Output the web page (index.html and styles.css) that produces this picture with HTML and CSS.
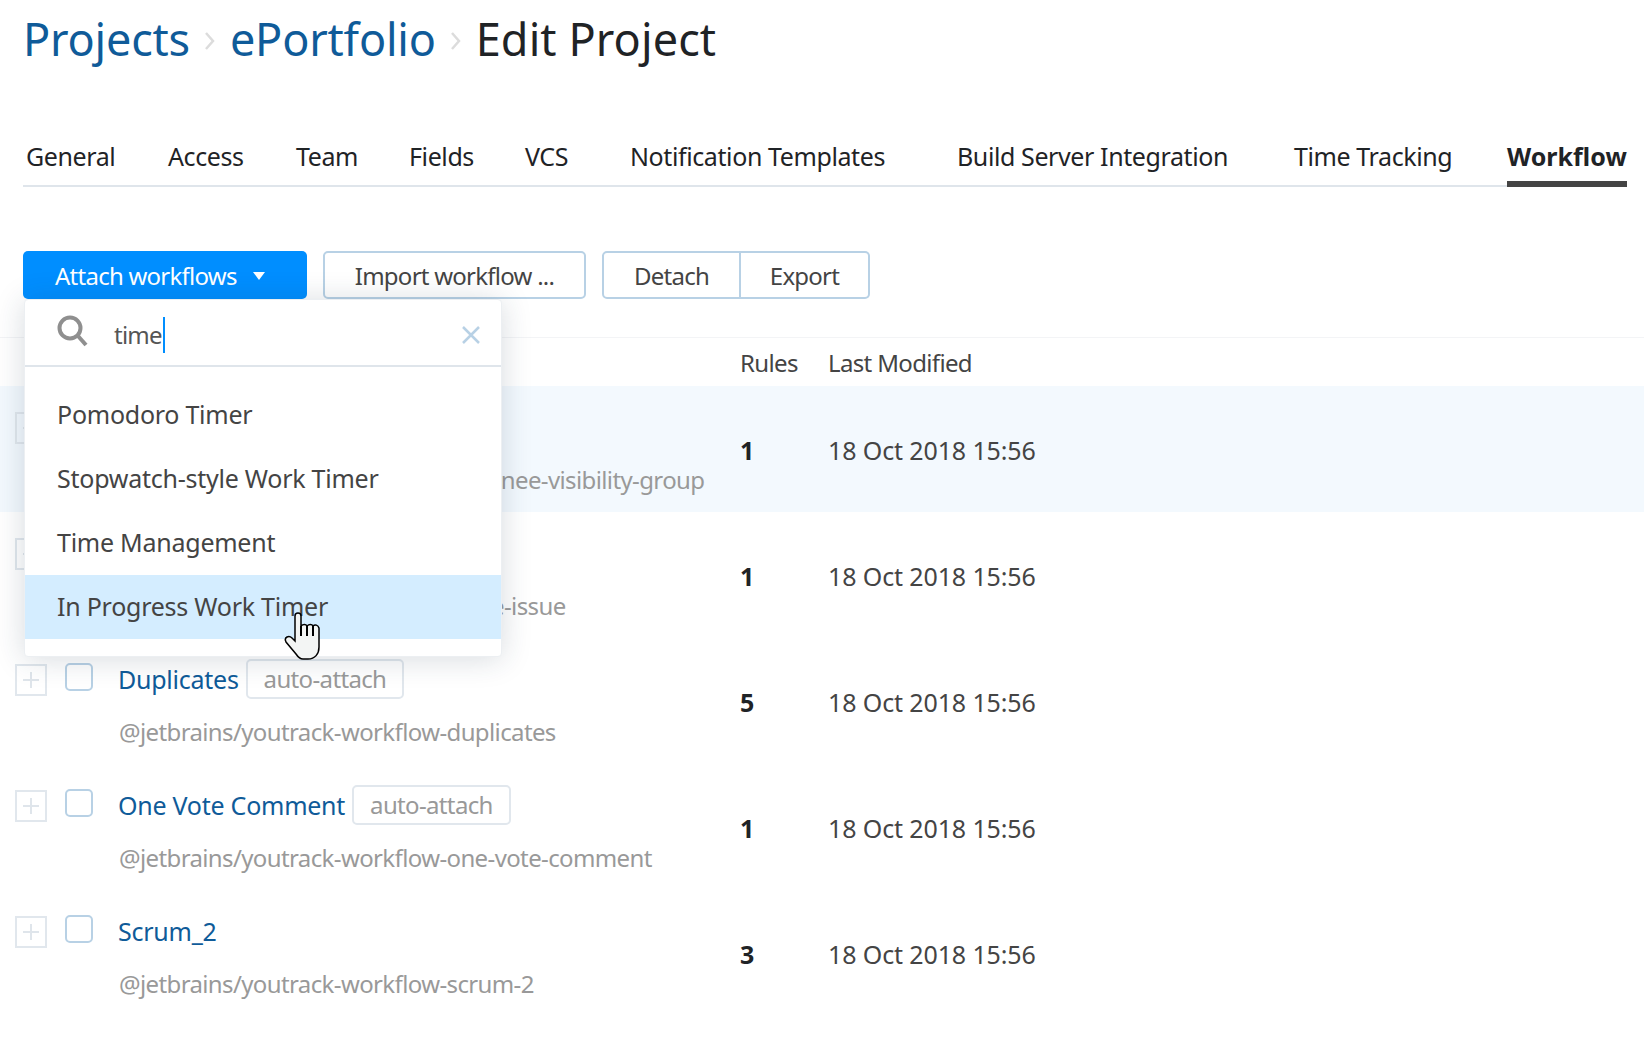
FILE: index.html
```html
<!DOCTYPE html>
<html lang="en">
  <head>
    <meta charset="UTF-8" />
    <title>Edit Project</title>
    <link rel="stylesheet" href="styles.css">
  </head>

  <body>
    <h1 class="crumbs">
      <a href="#">Projects</a>
      <svg class="crumb-sep" viewBox="0 0 12 20"><path d="M2 2l7 8-7 8" /></svg>
      <a href="#">ePortfolio</a>
      <svg class="crumb-sep" viewBox="0 0 12 20"><path d="M2 2l7 8-7 8" /></svg>
      <span class="crumb-current">Edit Project</span>
    </h1>

    <ul class="tabs">
      <li>General</li>
      <li>Access</li>
      <li>Team</li>
      <li>Fields</li>
      <li>VCS</li>
      <li>Notification Templates</li>
      <li>Build Server Integration</li>
      <li>Time Tracking</li>
      <li class="active">Workflow</li>
    </ul>

    <div class="toolbar">
      <button class="btn btn-primary">Attach workflows <i class="caret"></i></button>
      <button class="btn btn-import">Import workflow ...</button>
      <div class="btn-group">
        <button class="btn btn-detach">Detach</button>
        <button class="btn btn-export">Export</button>
      </div>
    </div>

    <div class="table">
      <div class="head">
        <span class="col-rules">Rules</span>
        <span class="col-date">Last Modified</span>
      </div>

      <div class="row selected">
        <span class="expand"></span>
        <span class="check"></span>
        <div class="info">
          <div class="name"><a href="#">Assignee Visibility Group</a></div>
          <div class="pkg">@jetbrains/youtrack-workflow-assignee-visibility-group</div>
        </div>
        <b class="col-rules">1</b>
        <span class="col-date">18 Oct 2018 15:56</span>
      </div>

      <div class="row">
        <span class="expand"></span>
        <span class="check"></span>
        <div class="info">
          <div class="name"><a href="#">Clone Issue</a></div>
          <div class="pkg">@jetbrains/youtrack-workflow-clone-issue</div>
        </div>
        <b class="col-rules">1</b>
        <span class="col-date">18 Oct 2018 15:56</span>
      </div>

      <div class="row">
        <span class="expand"></span>
        <span class="check"></span>
        <div class="info">
          <div class="name"><a href="#">Duplicates</a><span class="badge">auto-attach</span></div>
          <div class="pkg">@jetbrains/youtrack-workflow-duplicates</div>
        </div>
        <b class="col-rules">5</b>
        <span class="col-date">18 Oct 2018 15:56</span>
      </div>

      <div class="row">
        <span class="expand"></span>
        <span class="check"></span>
        <div class="info">
          <div class="name"><a href="#">One Vote Comment</a><span class="badge">auto-attach</span></div>
          <div class="pkg">@jetbrains/youtrack-workflow-one-vote-comment</div>
        </div>
        <b class="col-rules">1</b>
        <span class="col-date">18 Oct 2018 15:56</span>
      </div>

      <div class="row">
        <span class="expand"></span>
        <span class="check"></span>
        <div class="info">
          <div class="name"><a href="#">Scrum_2</a></div>
          <div class="pkg">@jetbrains/youtrack-workflow-scrum-2</div>
        </div>
        <b class="col-rules">3</b>
        <span class="col-date">18 Oct 2018 15:56</span>
      </div>
    </div>

    <!-- dropdown lies over the table -->
    <div class="popup">
      <div class="search">
        <svg class="search-icon" viewBox="0 0 31 32"><circle cx="13" cy="13" r="10.5" /><path d="M21 21l8 9" /></svg>
        <span class="query">time</span>
        <svg class="clear" viewBox="0 0 18 18"><path d="M1 1l16 16M17 1L1 17" /></svg>
      </div>
      <ul class="options">
        <li>Pomodoro Timer</li>
        <li>Stopwatch-style Work Timer</li>
        <li>Time Management</li>
        <li class="hover">In Progress Work Timer</li>
      </ul>
    </div>

    <svg class="pointer" viewBox="-1 -1 36 48">
      <path d="M10 3C10 1 11 0 13 0C15 0 16 1 16 3L16 13C18 11 21 11 22 13C24 11 27 11 28 13C30 11 33 12 34 15L34 34C34 41 30 46 23 46L18 46C15 46 13 44 11 41L1 29C0 27 0 25 2 24C4 23 6 24 7 25L10 28Z" />
      <path class="gaps" d="M16 13L16 23M22 13L22 23M28 13L28 23" />
    </svg>
  </body>
</html>
```

FILE: styles.css
```css
* {
  padding: 0;
  margin: 0;
  box-sizing: border-box;
}

html,
body {
  width: 100%;
  height: 100%;
  overflow: hidden;
}

body {
  position: relative;
  background-color: #fff;
  color: #1f2326;
  font: 25px/34px "Noto Sans", "Open Sans", sans-serif;
}

a {
  color: #0f5b99;
  text-decoration: none;
}

ul {
  list-style: none;
}

.crumbs {
  display: flex;
  align-items: center;
  height: 78px;
  padding-left: 23px;
  font-size: 45px;
  font-weight: 400;
  letter-spacing: -0.2px;
  line-height: 78px;
}

.crumb-sep {
  width: 12px;
  height: 20px;
  margin: 4px 14px 0 14px;
  fill: none;
  stroke: #dcdcdc;
  stroke-width: 2.5;
}

.crumb-current {
  letter-spacing: 0.1px;
}

.tabs {
  display: grid;
  grid-template-columns: 142px 128px 113px 116px 105px 327px 337px 213px 120px;
  width: 1604px;
  height: 105px;
  margin: 4px 0 0 23px;
  padding: 57px 0 0 3px;
  border-bottom: 2px solid #dfe5eb;
  letter-spacing: -0.4px;
}

.tabs li {
  height: 48px;
}

.tabs li.active {
  font-weight: 700;
  letter-spacing: 0;
  border-bottom: 6px solid #444;
}

.toolbar {
  display: flex;
  margin: 64px 0 0 23px;
}

.btn {
  height: 48px;
  padding-top: 2px;
  background-color: #fff;
  border: 2px solid #b8d1e5;
  border-radius: 5px;
  color: #444;
  font: inherit;
  font-size: 24px;
  letter-spacing: -0.75px;
}

.btn-primary {
  display: flex;
  align-items: center;
  width: 284px;
  padding-left: 32px;
  background-color: #008eff;
  border: 0;
  color: #fff;
}

.caret {
  width: 0;
  height: 0;
  margin-left: 16px;
  border-top: 8px solid #fff;
  border-left: 6px solid transparent;
  border-right: 6px solid transparent;
}

.btn-import {
  width: 263px;
  margin-left: 16px;
}

.btn-group {
  display: flex;
  margin-left: 16px;
}

.btn-detach {
  width: 139px;
  border-radius: 5px 0 0 5px;
}

.btn-export {
  width: 129px;
  border-left: 0;
  border-radius: 0 5px 5px 0;
}

.table {
  margin-top: 38px;
  border-top: 1px solid #f3f4f6;
}

.head {
  display: grid;
  grid-template-columns: 88px 1fr;
  height: 48px;
  padding: 8px 0 0 740px;
  color: #444;
  font-size: 24px;
}

.row {
  display: grid;
  grid-template-columns: 15px 50px 53px 622px 88px 1fr;
  align-items: start;
  height: 126px;
}

.row.selected {
  background-color: #f3f9fe;
}

.expand {
  grid-column: 1 / 3;
  width: 32px;
  height: 32px;
  margin: 26px 0 0 15px;
  background:
    linear-gradient(#dfe5eb, #dfe5eb) center / 16px 2px no-repeat,
    linear-gradient(#dfe5eb, #dfe5eb) center / 2px 16px no-repeat;
  border: 2px solid #e1e7ed;
}

.check {
  width: 28px;
  height: 28px;
  margin-top: 25px;
  background-color: #fff;
  border: 2px solid #b8d1e5;
  border-radius: 5px;
}

.name {
  display: flex;
  align-items: center;
  height: 40px;
  margin-top: 21px;
  letter-spacing: -0.25px;
}

.badge {
  height: 40px;
  margin-left: 7px;
  padding: 0 16px;
  border: 2px solid #e1e7ed;
  border-radius: 5px;
  color: #999;
  font-size: 24px;
  letter-spacing: -0.65px;
  line-height: 36px;
}

.pkg {
  margin-top: 16px;
  padding-left: 1px;
  color: #999;
  font-size: 24px;
  letter-spacing: -0.62px;
  white-space: nowrap;
}

.col-rules {
  padding-top: 47px;
  font-weight: 700;
}

.col-date {
  padding-top: 47px;
  color: #444;
  letter-spacing: -0.12px;
}

.head .col-rules,
.head .col-date {
  padding-top: 0;
  font-weight: 400;
  letter-spacing: -0.65px;
}

.popup {
  position: absolute;
  top: 299px;
  left: 24px;
  width: 478px;
  height: 358px;
  background-color: #fff;
  border: 1px solid #eceff2;
  border-radius: 4px;
  box-shadow: 0 2px 30px rgba(31, 55, 80, 0.18);
}

.search {
  display: flex;
  align-items: center;
  height: 67px;
  padding-left: 32px;
  border-bottom: 2px solid #dfe5eb;
}

.search-icon {
  width: 31px;
  height: 32px;
  margin-top: -4px;
  fill: none;
  stroke: #8f8f8f;
  stroke-width: 4;
}

.query {
  flex: 1;
  height: 36px;
  margin: 4px 0 0 26px;
  color: #555;
  font-size: 24px;
  letter-spacing: -0.75px;
  line-height: 36px;
}

.query::after {
  content: "";
  display: inline-block;
  width: 2px;
  height: 36px;
  margin-left: 1px;
  background-color: #008eff;
  vertical-align: top;
}

.clear {
  width: 18px;
  height: 18px;
  margin: 4px 21px 0 0;
  fill: none;
  stroke: #b8d1e5;
  stroke-width: 2.5;
}

.options {
  padding: 16px 0 17px;
}

.options li {
  height: 64px;
  padding-left: 32px;
  color: #444;
  letter-spacing: -0.25px;
  line-height: 62px;
}

.options li.hover {
  background-color: #d4edff;
}

.pointer {
  position: absolute;
  top: 612px;
  left: 284px;
  width: 36px;
  height: 48px;
}

.pointer path {
  fill: #f3f5f4;
  stroke: #000;
  stroke-width: 1.5;
}

.pointer .gaps {
  fill: none;
  stroke-width: 2;
}
```
